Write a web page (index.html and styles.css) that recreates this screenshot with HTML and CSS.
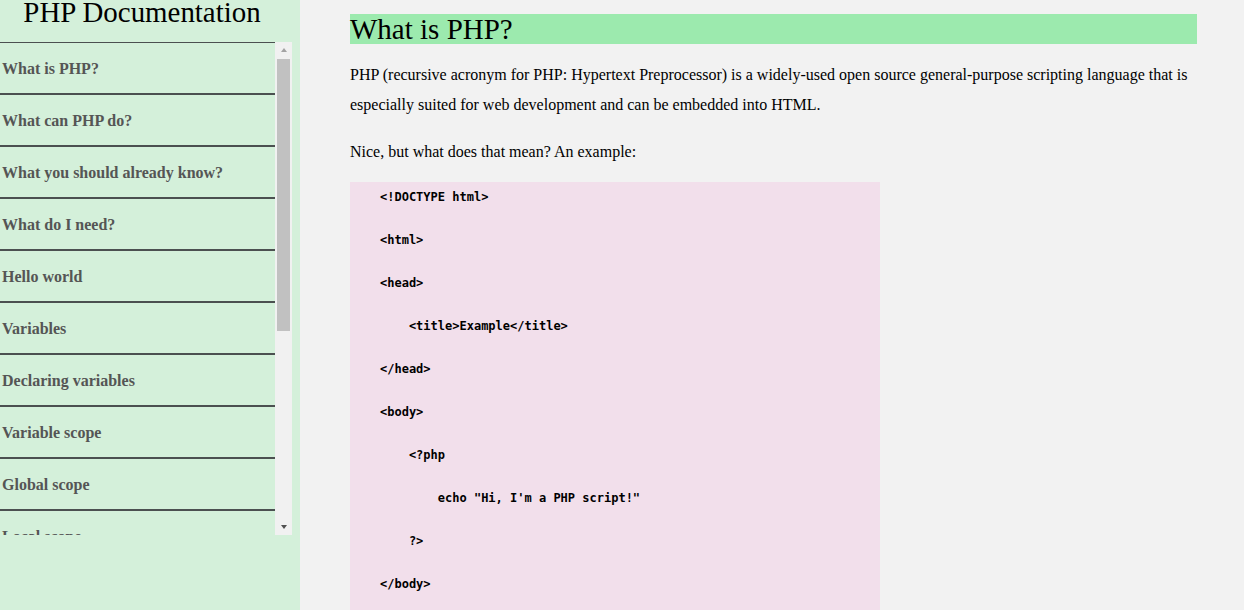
FILE: index.html
```html
<!DOCTYPE html>
<html lang="en">
<head>
<meta charset="utf-8">
<title>PHP Documentation</title>
<link rel="stylesheet" href="styles.css">
</head>
<body>
<div class="page">
  <aside class="sidebar">
    <h2 class="side-title">PHP Documentation</h2>
    <div class="nav-box">
      <nav class="nav">
        <a class="nav-item" href="#what">What is PHP?</a>
        <a class="nav-item" href="#can">What can PHP do?</a>
        <a class="nav-item" href="#know">What you should already know?</a>
        <a class="nav-item" href="#need">What do I need?</a>
        <a class="nav-item" href="#hello">Hello world</a>
        <a class="nav-item" href="#vars">Variables</a>
        <a class="nav-item" href="#declaring">Declaring variables</a>
        <a class="nav-item" href="#scope">Variable scope</a>
        <a class="nav-item" href="#global">Global scope</a>
        <a class="nav-item" href="#local">Local scope</a>
        <a class="nav-item" href="#gkw">The global keyword</a>
        <a class="nav-item" href="#skw">The static keyword</a>
        <a class="nav-item" href="#echo">Echo and print</a>
        <a class="nav-item" href="#types">Data types</a>
        <a class="nav-item" href="#strings">Strings</a>
        <a class="nav-item" href="#numbers">Numbers</a>
      </nav>
      <div class="scrollbar" aria-hidden="true">
        <div class="sb-btn"><span class="arrow-up"></span></div>
        <div class="sb-track"><div class="sb-thumb"></div></div>
        <div class="sb-btn"><span class="arrow-down"></span></div>
      </div>
    </div>
  </aside>
  <main class="main">
    <section class="section" id="what">
      <h1 class="section-title">What is PHP?</h1>
      <p class="text">PHP (recursive acronym for PHP: Hypertext Preprocessor) is a widely-used open source general-purpose scripting language that is especially suited for web development and can be embedded into HTML.</p>
      <p class="text">Nice, but what does that mean? An example:</p>
<pre class="code">&lt;!DOCTYPE html&gt;

&lt;html&gt;

&lt;head&gt;

    &lt;title&gt;Example&lt;/title&gt;

&lt;/head&gt;

&lt;body&gt;

    &lt;?php

        echo "Hi, I'm a PHP script!"

    ?&gt;

&lt;/body&gt;

&lt;/html&gt;</pre>
    </section>
  </main>
</div>
</body>
</html>
```
FILE: styles.css
```css
html, body {
  margin: 0;
  padding: 0;
  height: 100%;
}

body {
  font-family: "Liberation Serif", "Times New Roman", serif;
  background: #f2f2f2;
  color: #000;
  overflow: hidden;
}

.page {
  display: flex;
  height: 100vh;
}

.sidebar {
  width: 300px;
  flex: 0 0 300px;
  background: #d4f0da;
  display: flex;
  flex-direction: column;
}

.side-title {
  margin: -3px 16px 0 0;
  height: 45px;
  font-size: 28.9px;
  font-weight: normal;
  text-align: center;
  line-height: 31px;
  color: #000;
}

.nav-box {
  width: 292px;
  height: 493px;
  display: flex;
}

.nav {
  flex: 1;
  overflow: hidden;
  display: flex;
  flex-direction: column;
}

.nav-item {
  flex: 0 0 auto;
  display: flex;
  align-items: center;
  height: 50px;
  border-top: 2px solid #4b5050;
  padding-left: 2px;
  padding-top: 1px;
  box-sizing: content-box;
  height: 49px;
  font-size: 16px;
  font-weight: bold;
  color: #555555;
  text-decoration: none;
}

.nav-item:first-child {
  margin-top: -1px;
}

.scrollbar {
  width: 17px;
  flex: 0 0 17px;
  background: #f1f1f1;
  display: flex;
  flex-direction: column;
}

.sb-btn {
  height: 17px;
  flex: 0 0 17px;
  display: flex;
  align-items: center;
  justify-content: center;
}

.arrow-up,
.arrow-down {
  width: 0;
  height: 0;
  border-left: 3.5px solid transparent;
  border-right: 3.5px solid transparent;
}

.arrow-up {
  border-bottom: 4px solid #a3a3a3;
  margin-top: -1px;
}

.arrow-down {
  border-top: 4px solid #505050;
  margin-top: 1px;
}

.sb-track {
  flex: 1;
  padding: 0 2px;
}

.sb-thumb {
  height: 272px;
  background: #c1c1c1;
}

.main {
  flex: 1;
  padding: 14px 47px 0 50px;
  overflow: hidden;
}

.section-title {
  margin: 0;
  background: #9ceaae;
  font-size: 29px;
  font-weight: normal;
  line-height: 30px;
  height: 30px;
}

.text {
  font-size: 16px;
  line-height: 29.5px;
  margin: 16px 0 15px;
}

.text + .text {
  margin-top: 18px;
}

.code {
  width: 500px;
  margin: 0;
  padding: 5px 0 0 30px;
  background: #f2dfeb;
  font-family: "DejaVu Sans Mono", "Liberation Mono", monospace;
  font-weight: bold;
  font-size: 12px;
  line-height: 21.5px;
  color: #000;
}
```
